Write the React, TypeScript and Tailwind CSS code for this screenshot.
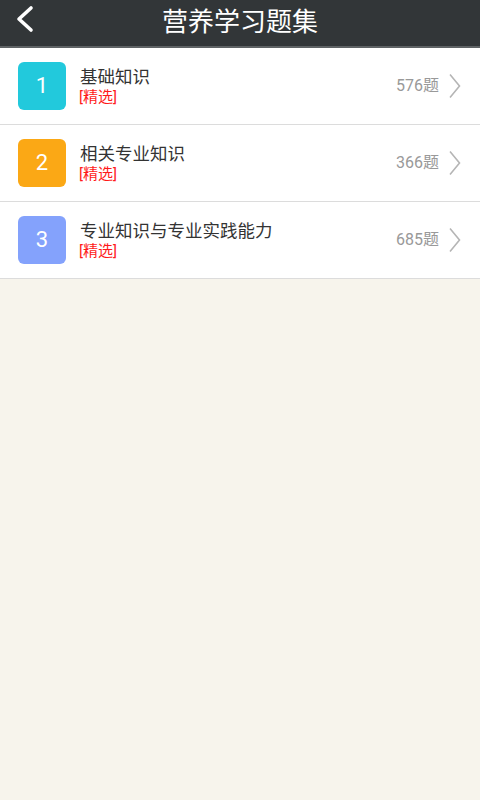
import React from "react";

const items = [
  { n: "1", title: "基础知识", count: "576题", color: "bg-[#22c9dc]" },
  { n: "2", title: "相关专业知识", count: "366题", color: "bg-[#fba815]" },
  { n: "3", title: "专业知识与专业实践能力", count: "685题", color: "bg-[#84a2fc]" },
];

export default function App() {
  return (
    <div
      className="w-[480px] h-[800px] bg-[#f7f4ec] flex flex-col"
      style={{ fontFamily: '"Roboto","Noto Sans CJK SC",sans-serif' }}
    >
      <div className="relative h-[48px] bg-[#323638] border-b-2 border-[#5f6365] flex items-center justify-center shrink-0">
        <svg className="absolute left-[14px] top-[5px]" width="22" height="28" viewBox="0 0 22 28">
          <path d="M17 3 L5 14 L17 25" fill="none" stroke="#ffffff" strokeWidth="3.6" strokeLinecap="round" strokeLinejoin="round" />
        </svg>
        <span className="text-white text-[26px] leading-none -mt-[2px]">营养学习题集</span>
      </div>
      <div className="flex flex-col bg-white">
        {items.map((it) => (
          <div key={it.n} className="h-[77px] flex items-center border-b border-[#dcdcdc] pl-[18px] pr-[18px]">
            <div className={`w-[48px] h-[48px] rounded-[6px] ${it.color} flex items-center justify-center text-white text-[22px] -mt-[1px]`}>
              {it.n}
            </div>
            <div className="ml-[14px] flex flex-col flex-1">
              <span className="text-[17.5px] leading-[22px] text-[#333333]">{it.title}</span>
              <span className="text-[15px] leading-[19px] text-[#ff1a1a] -ml-[1px]">[精选]</span>
            </div>
            <span className="text-[16px] text-[#999999]">{it.count}</span>
            <svg className="ml-[9px]" width="14" height="26" viewBox="0 0 14 26">
              <path d="M2 1.5 L11.5 13 L2 24.5" fill="none" stroke="#b5b5b5" strokeWidth="1.6" />
            </svg>
          </div>
        ))}
      </div>
    </div>
  );
}
